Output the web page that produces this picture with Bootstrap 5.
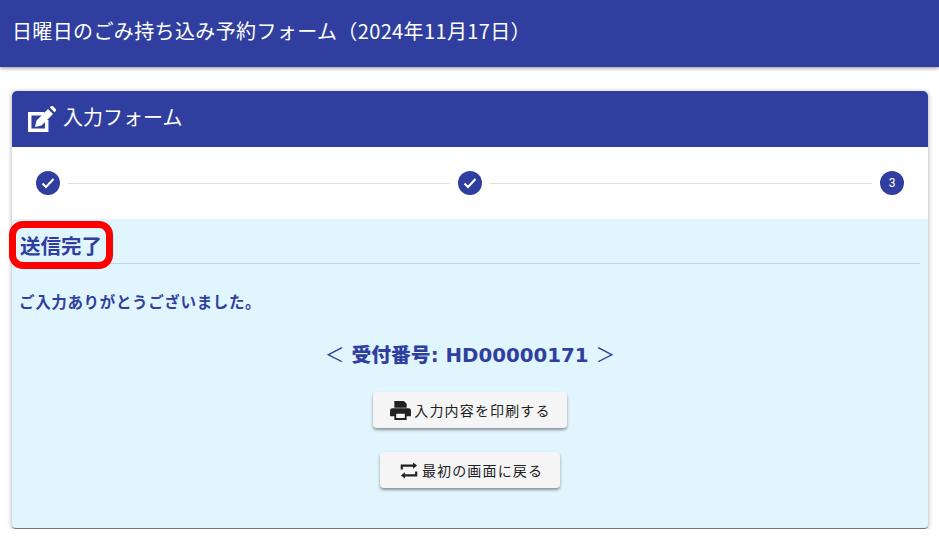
<!DOCTYPE html>
<html lang="ja">
<head>
<meta charset="utf-8">
<title>予約フォーム</title>
<link href="https://cdn.jsdelivr.net/npm/bootstrap@5.3.0/dist/css/bootstrap.min.css" rel="stylesheet">
<style>
body{background:#fff;font-family:"Noto Sans CJK JP","Liberation Sans",sans-serif;color:#212121;overflow:hidden}
.topbar{background:#303f9f;height:67px;box-shadow:0 1px 4px rgba(0,0,0,.45);color:#fff;font-size:20px;padding:0 12px 5px;letter-spacing:.37px}
.panel-wrap{padding:24px 11px 0 12px}
.panel{border:0;border-radius:4px;box-shadow:0 1px 5px rgba(0,0,0,.35);width:916px}
.panel-head{background:#303f9f;color:#fff;height:56px;padding:0 16px 4px;font-size:20px;gap:7px;border:0;border-radius:4px 4px 0 0}
.panel-head svg{margin-top:4px}
.stepbar{height:72px;background:#fff;padding:0 24px;gap:8px}
.stepdot{width:24px;height:24px;border-radius:50%;background:#303f9f;color:#fff;font-size:12px;flex:none;font-family:"Roboto",sans-serif}
.stepline{flex:1;height:1px;background:#e0e0e0}
.donebody{background:#e1f5fe;height:310px;padding:0 8px;color:#303f9f;border-radius:0 0 4px 4px;border-bottom:1px solid #6d777d}
.donehead{height:45px;border-bottom:1px solid #c5d5dd;font-size:20.500px;font-weight:700;padding-top:8px}
.thanks{font-size:15.500px;font-weight:700;margin:25px 0 0 -1px;line-height:24px;letter-spacing:.65px}
.receipt{font-size:19.800px;font-weight:700;margin-top:26px;line-height:30px;font-family:"DejaVu Sans","Noto Sans CJK JP",sans-serif}
.receipt i{font-style:normal;font-weight:400;font-family:"Noto Sans CJK JP",sans-serif}
.receipt b{font-family:"Noto Sans CJK JP",sans-serif}
.actbtn{background:#f5f5f5;color:#212121;border:0;border-radius:4px;box-shadow:0 2px 3px rgba(0,0,0,.4);font-size:14px;height:36px;padding:0 16px 0 17px;gap:3px;letter-spacing:1.150px}
.actbtn:hover{background:#eee}
.actbtn.backbtn{padding:0 17px 0 20px;gap:4px}
.btnstack{margin-top:21px}
.redmark{position:absolute;left:9px;top:221px;width:104px;height:48px;border:7px solid #f00;border-radius:14px;pointer-events:none}
</style>
</head>
<body>
<header class="topbar d-flex align-items-center"><span>日曜日のごみ持ち込み予約フォーム（2024年11月17日）</span></header>
<div class="panel-wrap">
  <div class="card panel">
    <div class="card-header panel-head d-flex align-items-center">
      <svg width="28" height="26" viewBox="0 0 28 26" aria-hidden="true"><path fill="none" stroke="#fff" stroke-width="3.500" d="M16 7.700H1.700v16.600h17V14"/><path fill="#fff" d="M20 3l5 5L13.500 19.500l-6.500 1.500 1.500-6.500zM21.700 1.500L23 .3a1.500 1.500 0 0 1 2 0l2.700 2.700a1.500 1.500 0 0 1 0 2L26.500 6.300z"/></svg>
      <span>入力フォーム</span>
    </div>
    <div class="stepbar d-flex align-items-center">
      <div class="stepdot d-flex align-items-center justify-content-center"><svg width="14" height="12" viewBox="0 0 14 12"><path d="M1.500 6.500l3.500 3.500 7.500-8" fill="none" stroke="#fff" stroke-width="2"/></svg></div>
      <div class="stepline"></div>
      <div class="stepdot d-flex align-items-center justify-content-center"><svg width="14" height="12" viewBox="0 0 14 12"><path d="M1.500 6.500l3.500 3.500 7.500-8" fill="none" stroke="#fff" stroke-width="2"/></svg></div>
      <div class="stepline"></div>
      <div class="stepdot d-flex align-items-center justify-content-center">3</div>
    </div>
    <div class="donebody">
      <div class="donehead d-flex align-items-center">送信完了</div>
      <p class="thanks">ご入力ありがとうございました。</p>
      <div class="receipt text-center"><i>＜</i> <b>受付番号</b>: HD00000171 <i>＞</i></div>
      <div class="btnstack d-flex flex-column align-items-center">
        <button type="button" class="btn actbtn d-flex align-items-center">
          <svg width="21" height="19" viewBox="0 0 22 20"><path fill="#212121" d="M4.500 0h10l3 3v4h-13zM2.500 7.500h17A2.500 2.500 0 0 1 22 10v6h-4.500v4h-13v-4H0v-6a2.500 2.500 0 0 1 2.500-2.500zM6.500 13.500v4.500h9v-4.500z"/></svg>
          入力内容を印刷する
        </button>
        <button type="button" class="btn actbtn backbtn d-flex align-items-center mt-4">
          <svg width="18" height="19" viewBox="0 0 20 20"><path fill="none" stroke="#212121" stroke-width="2.400" d="M2 9V4.500h13M18 11v4.500H5"/><path fill="#212121" d="M14.500 1l4.500 3.500L14.500 8zM5.500 12L1 15.500 5.500 19z"/></svg>
          最初の画面に戻る
        </button>
      </div>
    </div>
  </div>
</div>
<div class="redmark"></div>
</body>
</html>
